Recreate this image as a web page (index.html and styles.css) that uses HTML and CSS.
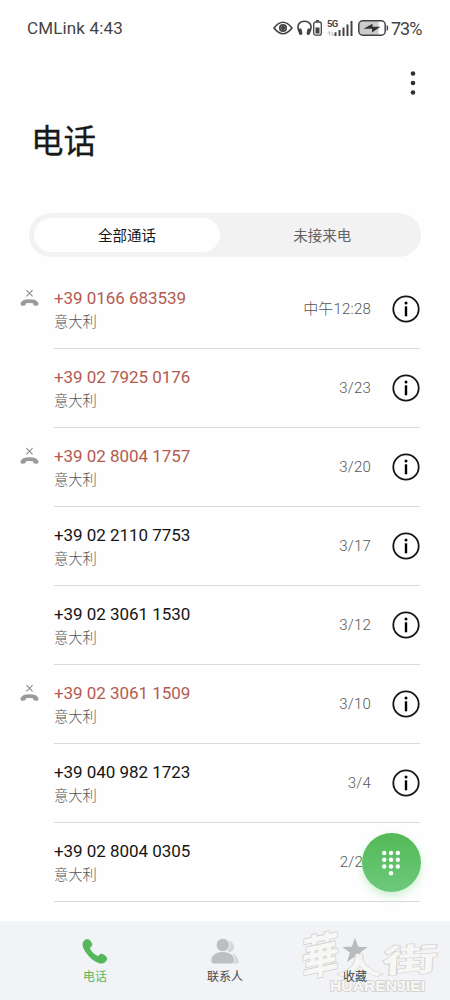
FILE: index.html
```html
<!DOCTYPE html>
<html lang="zh-CN">
<head>
<meta charset="utf-8">
<title>电话</title>
<link rel="stylesheet" href="styles.css">
</head>
<body>
<svg class="defs" width="0" height="0">
  <symbol id="info" viewBox="0 0 28 28"><circle cx="14" cy="14" r="12.7" fill="none" stroke="#161616" stroke-width="1.8"/><circle cx="14" cy="8" r="1.5"/><path d="M12.8 11.3h2.4v10h-2.4z"/></symbol>
  <symbol id="missed" viewBox="0 0 19 18"><path d="M6.4 1.200l6.200 6.200M12.600 1.200l-6.200 6.200" fill="none" stroke="#8c8c8c" stroke-width="1.100"/><path d="M2.800 14.200C3.800 11.400 15.200 11.400 16.200 14.200" fill="none" stroke="#9a9a9a" stroke-width="3.800"/><path d="M.6 13.500l5.200-.5v2c0 .9-.5 1.300-1.400 1.400l-2.100.3C.9 16.800.3 15.800.6 13.500zM18.400 13.500l-5.200-.5v2c0 .9.5 1.300 1.400 1.400l2.100.3c1.400.1 2-.9 1.700-3.200z" fill="#9a9a9a"/></symbol>
</svg>
<main class="phone">
  <header class="status">
    <span class="carrier">CMLink 4:43</span>
    <div class="indicators">
      <svg class="eye" width="20" height="16" viewBox="0 0 20 16" fill="none" stroke="#444" stroke-width="1.700"><path d="M1 8Q10-3.500 19 8Q10 19.500 1 8z"/><circle cx="10" cy="8" r="3.200"/><circle cx="10" cy="8" r="1.300" fill="#444"/></svg>
      <svg class="head" width="15" height="16" viewBox="0 0 15 16"><path d="M2.500 12C-1.500 5 3 1.300 7.500 1.300S16.500 5 12.500 12" fill="none" stroke="#444" stroke-width="1.600"/><rect x="1.700" y="8.500" width="3.400" height="6.500" rx="1.500" fill="#444" transform="rotate(-12 3 12)"/><rect x="9.900" y="8.500" width="3.400" height="6.500" rx="1.500" fill="#444" transform="rotate(12 12 12)"/></svg>
      <svg class="cell" width="9" height="16" viewBox="0 0 9 16"><rect x=".7" y="2" width="7.600" height="13.200" rx="2" fill="none" stroke="#444" stroke-width="1.300"/><path d="M3 0h3v1.500H3zM2.500 7.500h4v6h-4z" fill="#444"/></svg>
      <div class="signal"><b>5G</b><svg width="26" height="16" viewBox="0 0 26 16"><path d="M2.500 11.500v4M0.500 13l2-1.500M5 11.500v4l2-1.500" stroke="#bbb" fill="none"/><path d="M7.500 12.200h2V16h-2zM11.500 10h2v6h-2zM15.500 7.500h2V16h-2zM19.500 4.500h2V16h-2zM23.500 1h2v15h-2z" fill="#444"/></svg></div>
      <svg class="battery" width="31" height="16" viewBox="0 0 31 16"><path d="M4.800.8H20.500v14.400H4.800q-4 0-4-4V4.800q0-4 4-4z" fill="#ccc"/><rect x=".8" y=".8" width="26.400" height="14.400" rx="4" fill="none" stroke="#444" stroke-width="1.500"/><path d="M5.500 8.800l9-5v3h8l-8.500 5.700v-3.700z" fill="#333"/><path d="M28.700 5c2 .6 2 5.400 0 6z" fill="#444"/></svg>
      <span class="percent">73%</span>
    </div>
  </header>
  <div class="actions"><svg width="6" height="26" viewBox="0 0 6 26" fill="#303030"><circle cx="3" cy="3.500" r="2.300"/><circle cx="3" cy="13" r="2.300"/><circle cx="3" cy="22.500" r="2.300"/></svg></div>
  <h1>电话</h1>
  <div class="tabs"><div class="tab selected">全部通话</div><div class="tab">未接来电</div></div>
  <section class="calls">
    <article class="call missed"><svg class="mark"><use href="#missed"/></svg><div class="row"><div class="who"><b>+39 0166 683539</b><small>意大利</small></div><time class="noon">中午12:28</time><svg class="info"><use href="#info"/></svg></div></article>
    <article class="call missed"><div class="row"><div class="who"><b>+39 02 7925 0176</b><small>意大利</small></div><time>3/23</time><svg class="info"><use href="#info"/></svg></div></article>
    <article class="call missed"><svg class="mark"><use href="#missed"/></svg><div class="row"><div class="who"><b>+39 02 8004 1757</b><small>意大利</small></div><time>3/20</time><svg class="info"><use href="#info"/></svg></div></article>
    <article class="call"><div class="row"><div class="who"><b>+39 02 2110 7753</b><small>意大利</small></div><time>3/17</time><svg class="info"><use href="#info"/></svg></div></article>
    <article class="call"><div class="row"><div class="who"><b>+39 02 3061 1530</b><small>意大利</small></div><time>3/12</time><svg class="info"><use href="#info"/></svg></div></article>
    <article class="call missed"><svg class="mark"><use href="#missed"/></svg><div class="row"><div class="who"><b>+39 02 3061 1509</b><small>意大利</small></div><time>3/10</time><svg class="info"><use href="#info"/></svg></div></article>
    <article class="call"><div class="row"><div class="who"><b>+39 040 982 1723</b><small>意大利</small></div><time>3/4</time><svg class="info"><use href="#info"/></svg></div></article>
    <article class="call"><div class="row last"><div class="who"><b>+39 02 8004 0305</b><small>意大利</small></div><time>2/2</time></div></article>
  </section>
  <nav>
    <div class="item active"><svg width="28" height="28" viewBox="0 0 28 28"><path d="M2.600 4.200C5.500.8 8 1.200 10.300 5c1.500 2.500 1.200 3.800-.5 5-1.200.9-.8 1.800.4 3.400 1.300 1.800 2.700 3.200 4.400 4.400 1.600 1.200 2.500 1.600 3.400.4 1.200-1.700 2.500-2 5-.5 3.800 2.300 4.200 4.800.8 7.700-3.200 2.700-9.500.2-15.200-5.500S-.2 7.400 2.600 4.200z" fill="#55b95c"/></svg><span>电话</span></div>
    <div class="item"><svg width="30" height="28" viewBox="0 0 30 28"><path d="M16 3.800c5-.4 8 2.500 8 6.200s-3 5.500-6 5.200zM23 16.500c3.500 1.500 5.500 5 5.500 8 0 1.500-.8 2.300-2 2.300H22z" fill="#d6d7d8"/><g fill="#bebfc0" stroke="#f1f3f6" stroke-width="1"><circle cx="12.800" cy="8" r="6.700"/><path d="M.7 23.500C1.500 11.500 24 11.500 24.800 23.500q0 3.500-3 3.500H3.700q-3 0-3-3.500z"/></g></svg><span>联系人</span></div>
    <div class="item"><svg width="28" height="28" viewBox="0 0 28 28"><path d="M14 .8l3.200 8.900 9.600.2-7.700 5.700 2.800 9.300-7.900-5.500-7.900 5.500 2.800-9.300L1.200 9.900l9.600-.2z" fill="#b9babc"/></svg><span class="front">收藏</span></div>
  </nav>
  <div class="fab"><svg width="20" height="28" viewBox="0 0 20 28" fill="#fff"><circle cx="3.200" cy="4" r="2.200"/><circle cx="10" cy="4" r="2.200"/><circle cx="16.800" cy="4" r="2.200"/><circle cx="3.200" cy="10.800" r="2.200"/><circle cx="10" cy="10.800" r="2.200"/><circle cx="16.800" cy="10.800" r="2.200"/><circle cx="3.200" cy="17.500" r="2.200"/><circle cx="10" cy="17.500" r="2.200"/><circle cx="16.800" cy="17.500" r="2.200"/><circle cx="10" cy="24.300" r="2.200"/></svg></div>
  <svg class="watermark" width="150" height="66" viewBox="0 0 150 66">
    <g class="outline">
      <text class="brush" transform="translate(2 47) rotate(-12) skewX(-12) scale(.95 1.150)" font-size="40">華</text>
      <text class="brush" transform="translate(36 44) scale(1.180 .6)" font-size="40">人</text>
      <text class="brush" transform="translate(82 43) rotate(-3) skewX(-6) scale(1.420 .82)" font-size="39">街</text>
    </g>
    <text class="latin" x="30" y="61" textLength="95" lengthAdjust="spacingAndGlyphs">HUARENJIEI</text>
  </svg>
</main>
</body>
</html>
```

FILE: styles.css
```css
* { box-sizing: border-box; }
body { margin: 0; background: #fefefe; font-family: Roboto, "Noto Sans CJK SC", sans-serif; color: #151515; }
.defs { position: absolute; }
.phone { position: relative; width: 450px; height: 1000px; overflow: hidden; display: flex; flex-direction: column; }
.status { height: 56px; flex: none; display: flex; justify-content: space-between; align-items: center; padding: 0 27px; font-size: 17px; color: #444; }
.carrier { letter-spacing: .15px; }
.indicators { display: flex; align-items: center; }
.head { margin-left: 4px; }
.cell { margin-left: 1px; }
.signal { display: flex; position: relative; margin-left: 5px; }
.signal b { position: absolute; left: 0; top: -1px; font-size: 9.500px; line-height: 9px; letter-spacing: -.7px; }
.battery { margin-left: 5px; }
.percent { margin-left: 2px; font-size: 18px; letter-spacing: -1px; width: 32px; }
.actions { height: 53px; display: flex; justify-content: flex-end; align-items: center; padding-right: 34px; }
h1 { margin: 0; height: 104px; padding: 0 31px; font-size: 32.500px; line-height: 66px; font-weight: 400; color: #191919; -webkit-text-stroke: .3px #191919; }
.tabs { height: 44px; margin: 0 29.500px 0 29px; padding: 5px; display: flex; border-radius: 22px; background: #f2f2f2; font-size: 14.500px; }
.tab { flex: 1; display: flex; justify-content: center; align-items: center; padding: 0 0 2px 9px; color: #626262; }
.tab.selected { flex: 0 0 186px; padding: 0 0 2px; border-radius: 18px; background: #fefefe; color: #151515; }
.calls { padding-top: 13px; height: 664px; }
.call { height: 79px; padding: 0 30px 0 54px; position: relative; }
.row { height: 79px; display: flex; align-items: center; border-bottom: 1px solid #dadada; }
.mark { position: absolute; left: 20px; top: 19px; width: 19px; height: 18px; }
.who { flex: 1; display: flex; flex-direction: column; gap: 2px; padding-top: 2px; }
.who b { font-size: 17px; line-height: 22px; font-weight: 400; white-space: nowrap; letter-spacing: -.05px; }
.missed .who b { color: #b45a50; }
.who small { font-size: 14.300px; line-height: 22px; font-weight: 300; color: #555; }
time { font-size: 15px; font-weight: 300; color: #555; letter-spacing: .2px; }
time.noon { padding-bottom: 3px; }
.info { width: 28px; height: 28px; margin-left: 20.500px; margin-right: .5px; }
.last time { margin-right: 57px; }
nav { height: 79px; flex: none; display: flex; padding: 0 30px; background: #f1f3f6; }
.item { flex: 1; display: flex; flex-direction: column; align-items: center; padding-top: 16px; font-size: 12px; line-height: 20px; color: #484848; }
.item svg { flex: none; margin-bottom: 2px; }
.item.active { color: #55b95c; }
.front { position: relative; z-index: 2; }
.fab { position: absolute; left: 361.500px; top: 833px; width: 59px; height: 59px; border-radius: 50%; background: linear-gradient(#54b957, #6cc97b); box-shadow: 0 4px 9px rgba(90, 210, 115, .3); display: flex; align-items: center; justify-content: center; }
.watermark { position: absolute; left: 300px; top: 930px; overflow: visible; z-index: 1; }
.watermark text { fill: #f8f8f7; stroke: #d0cec9; stroke-width: 1.500; stroke-linejoin: round; paint-order: stroke; }
.watermark .brush { font-family: "Noto Sans CJK TC", sans-serif; font-weight: 700; }
.watermark .outline { opacity: .9; }
.watermark .latin { font-family: "Liberation Sans", sans-serif; font-size: 14px; font-weight: 700; }
```
